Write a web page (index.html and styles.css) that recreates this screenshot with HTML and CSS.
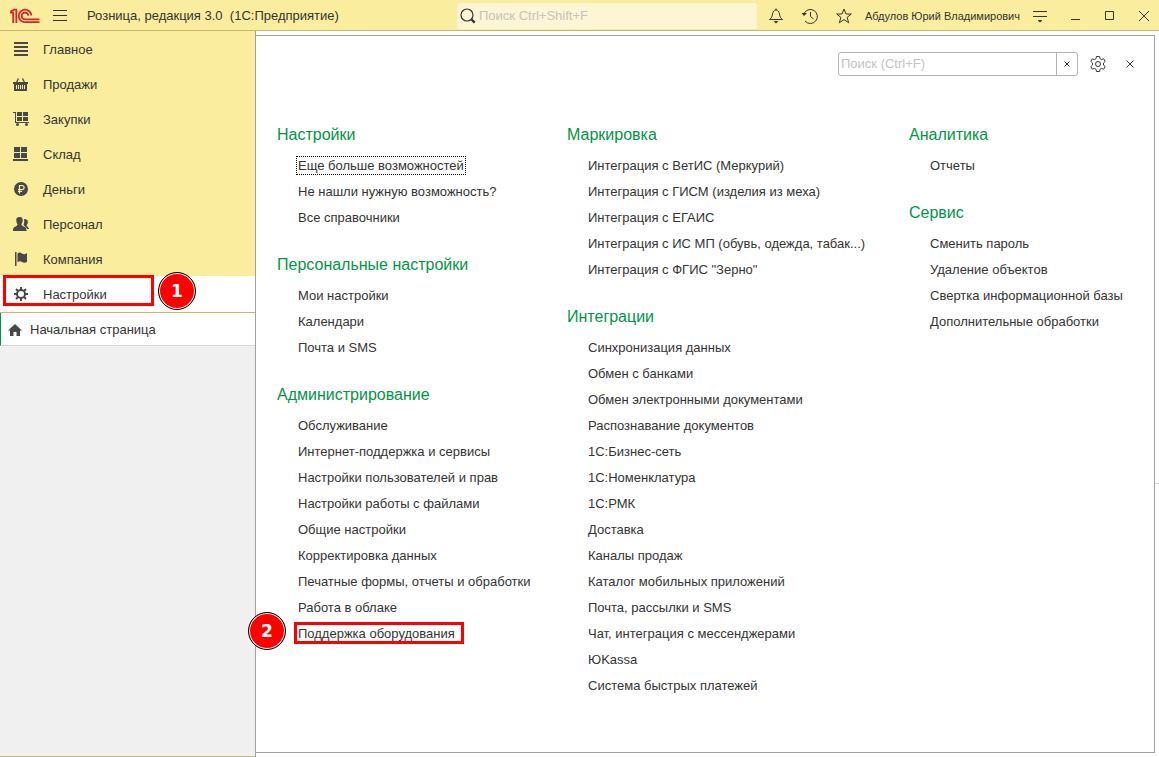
FILE: index.html
```html
<!DOCTYPE html>
<html lang="ru">
<head>
<meta charset="utf-8">
<title>Розница, редакция 3.0</title>
<link rel="stylesheet" href="styles.css">
</head>
<body>
<div class="app">
  <header class="topbar">
    <svg class="logo" viewBox="0 0 30 16" aria-label="1С">
      <path d="M0 4.600h3.200V15M.3 3.800L4 1.700H6.300V15"/>
      <path d="M21.300 7.500A6.300 6.300 0 1 0 15 14.200H29.500M18.300 7.700A3.300 3.300 0 1 0 15 11.300H29.500"/>
    </svg>
    <button class="icon-button menu" aria-label="Меню"><svg viewBox="0 0 14 12"><path d="M0 .5h14M0 5.500h14M0 10.500h14"/></svg></button>
    <h1 class="app-title">Розница, редакция 3.0 &nbsp;(1С:Предприятие)</h1>
    <label class="global-search">
      <svg viewBox="0 0 16 16"><circle cx="7" cy="7" r="6"/><path class="handle" d="M11.500 11.500l3.200 3.200"/></svg>
      <input type="text" placeholder="Поиск Ctrl+Shift+F" aria-label="Глобальный поиск">
    </label>
    <div class="tools">
      <button class="icon-button" aria-label="Уведомления"><svg class="i16" viewBox="0 0 16 16"><path d="M1.500 11.500h13c-2-1.500-2.500-2.500-3-5.500C11 3.500 10 2 8 2S5 3.500 4.500 6c-.5 3-1 4-3 5.500zM8 .5V2"/><path class="solid" d="M5.500 13h5L8 15.500z"/></svg></button>
      <button class="icon-button" aria-label="История"><svg class="i16" viewBox="0 0 16 16"><path d="M1.800 6A7 7 0 1 1 3 13M8.500 4v4.500l3 2.500"/><path class="solid" d="M-.5 5l2.500 3L5 5z"/></svg></button>
      <button class="icon-button" aria-label="Избранное"><svg class="i16" viewBox="0 0 16 16"><path d="M8 1l2 5h5.300l-4.200 3.400 1.600 5.400L8 11.600l-4.700 3.200 1.600-5.400L.7 6H6z"/></svg></button>
    </div>
    <a class="user" href="#">Абдулов Юрий Владимирович</a>
    <div class="window-tools">
      <button class="icon-button" aria-label="Сервис и настройки"><svg class="i14" viewBox="0 0 14 14"><path d="M0 2.500h14M0 7.500h14"/><path class="solid" d="M4.500 11h5L7 13.500z"/></svg></button>
      <button class="icon-button" aria-label="Свернуть"><svg class="i10" viewBox="0 0 10 10"><path d="M0 8.500h9"/></svg></button>
      <button class="icon-button" aria-label="Развернуть"><svg class="i10" viewBox="0 0 10 10"><path d="M.5 .5h8v8h-8z"/></svg></button>
      <button class="icon-button" aria-label="Закрыть"><svg class="i10" viewBox="0 0 10 10"><path d="M0 0l10 10M10 0L0 10"/></svg></button>
    </div>
  </header>

  <aside class="sidebar">
    <nav class="sections">
      <a class="section" href="#"><svg viewBox="0 0 16 16"><path d="M1 0h14v2H1zM1 4h14v2H1zM1 8h14v2H1zM1 12h14v2H1z"/></svg>Главное</a>
      <a class="section" href="#"><svg viewBox="0 0 16 16"><path fill-rule="evenodd" d="M0 5h3l2-4 1 .7L4.500 5h6L9 1.700l1-.7 2 4h3v2h-1v7H1V7H0zM3 8v4h1V8zm2 0v4h1V8zm2 0v4h1V8zm2 0v4h1V8zm2 0v4h1V8z"/></svg>Продажи</a>
      <a class="section" href="#"><svg viewBox="0 0 16 16"><path d="M0 0h3v10h13v1H2V1H0zM4 0h5v4H4zM10 0h5v4h-5zM4 5h5v4H4zM10 5h5v4h-5z"/><circle cx="4.500" cy="12.500" r="1.500"/><circle cx="13.500" cy="12.500" r="1.500"/></svg>Закупки</a>
      <a class="section" href="#"><svg viewBox="0 0 16 16"><path d="M1 0h6v5H1zM8 0h6v5H8zM1 6h6v5H1zM8 6h6v5H8zM0 12h15v2H0z"/></svg>Склад</a>
      <a class="section" href="#"><svg viewBox="0 0 16 16"><circle cx="8" cy="7" r="7"/><path class="cut" d="M6.500 11.500V3.500h2.500a2 2 0 0 1 0 4.200H5M5 9.500h4"/></svg>Деньги</a>
      <a class="section" href="#"><svg viewBox="0 0 16 16"><path d="M6.500 0C9 0 10 1.500 9.700 4c-.2 1.500-.9 2.500-1.200 3.200 0 2 3.500 2.300 4.500 3.800.4.600.5 2 .5 3H0c0-1 0-2.400.5-3 1-1.500 4-1.800 4-3.800C4 6.500 3.500 5.500 3.300 4 3 1.500 4 0 6.500 0z"/><path d="M11 2c3 0 4.300 1.500 3.800 4-.2 1.200-.8 1.500-1.200 2.200 0 1.300 1.800 1.300 2.400 3.800h-1.800c-.8-2-2.700-2.500-3.700-4C11 6.500 11.500 4.500 11 2z"/></svg>Персонал</a>
      <a class="section" href="#"><svg viewBox="0 0 16 16"><path d="M2 0h1.500v14H2zM4.500 1.500c1.500-1.500 3-1 4.500 0s3 1 5-.5v9c-2 1-3.500 1-5 0s-3-1-4.500.5z"/></svg>Компания</a>
      <a class="section current" href="#" aria-current="page"><svg viewBox="0 0 16 16"><path class="gear" d="M8 0v3M8 11v3M1 7h3M12 7h3M3 2l2 2M11 10l2 2M13 2l-2 2M5 10l-2 2"/><circle class="gear" cx="8" cy="7" r="4"/></svg>Настройки<span class="frame frame-section"></span><span class="step step-one">1</span></a>
    </nav>
    <a class="home" href="#"><svg viewBox="0 0 14 12"><path d="M7 0l7 6.500h-2V12H8.500V8h-3v4H2V6.500H0z"/></svg>Начальная страница</a>
  </aside>

  <main class="workspace">
    <section class="panel">
      <div class="panel-bar">
        <div class="panel-search">
          <input type="text" placeholder="Поиск (Ctrl+F)" aria-label="Поиск">
          <button class="clear" aria-label="Очистить"><svg viewBox="0 0 6 6"><path d="M.5.5l5 5M5.500.5l-5 5"/></svg></button>
        </div>
        <button class="icon-button" aria-label="Настройка"><svg class="i16" viewBox="0 0 16 16"><circle cx="8" cy="8" r="2.500"/><path d="M6.500.5h3l.5 2.200 1.500.9 2.100-.8 1.600 2.600L13.500 7v2l1.700 1.600-1.600 2.600-2.100-.8-1.500.9-.5 2.200h-3L6 13.300l-1.500-.9-2.100.8L.8 10.600 2.500 9V7L.8 5.400l1.600-2.600 2.100.8L6 2.700z"/></svg></button>
        <button class="icon-button" aria-label="Закрыть панель"><svg class="i8" viewBox="0 0 8 8"><path d="M.5.5l7 7M7.500.5l-7 7"/></svg></button>
      </div>
      <div class="columns">
        <div class="column">
          <section class="group"><h2>Настройки</h2><ul>
            <li><a class="focused" href="#">Еще больше возможностей</a></li>
            <li><a href="#">Не нашли нужную возможность?</a></li>
            <li><a href="#">Все справочники</a></li></ul></section>
          <section class="group"><h2>Персональные настройки</h2><ul>
            <li><a href="#">Мои настройки</a></li>
            <li><a href="#">Календари</a></li>
            <li><a href="#">Почта и SMS</a></li></ul></section>
          <section class="group"><h2>Администрирование</h2><ul>
            <li><a href="#">Обслуживание</a></li>
            <li><a href="#">Интернет-поддержка и сервисы</a></li>
            <li><a href="#">Настройки пользователей и прав</a></li>
            <li><a href="#">Настройки работы с файлами</a></li>
            <li><a href="#">Общие настройки</a></li>
            <li><a href="#">Корректировка данных</a></li>
            <li><a href="#">Печатные формы, отчеты и обработки</a></li>
            <li><a href="#">Работа в облаке</a></li>
            <li class="marked"><a href="#">Поддержка оборудования</a><span class="frame frame-link"></span><span class="step step-two">2</span></li></ul></section>
        </div>
        <div class="column">
          <section class="group"><h2>Маркировка</h2><ul>
            <li><a href="#">Интеграция с ВетИС (Меркурий)</a></li>
            <li><a href="#">Интеграция с ГИСМ (изделия из меха)</a></li>
            <li><a href="#">Интеграция с ЕГАИС</a></li>
            <li><a href="#">Интеграция с ИС МП (обувь, одежда, табак...)</a></li>
            <li><a href="#">Интеграция с ФГИС "Зерно"</a></li></ul></section>
          <section class="group"><h2>Интеграции</h2><ul>
            <li><a href="#">Синхронизация данных</a></li>
            <li><a href="#">Обмен с банками</a></li>
            <li><a href="#">Обмен электронными документами</a></li>
            <li><a href="#">Распознавание документов</a></li>
            <li><a href="#">1С:Бизнес-сеть</a></li>
            <li><a href="#">1С:Номенклатура</a></li>
            <li><a href="#">1С:РМК</a></li>
            <li><a href="#">Доставка</a></li>
            <li><a href="#">Каналы продаж</a></li>
            <li><a href="#">Каталог мобильных приложений</a></li>
            <li><a href="#">Почта, рассылки и SMS</a></li>
            <li><a href="#">Чат, интеграция с мессенджерами</a></li>
            <li><a href="#">ЮKassa</a></li>
            <li><a href="#">Система быстрых платежей</a></li></ul></section>
        </div>
        <div class="column">
          <section class="group"><h2>Аналитика</h2><ul>
            <li><a href="#">Отчеты</a></li></ul></section>
          <section class="group"><h2>Сервис</h2><ul>
            <li><a href="#">Сменить пароль</a></li>
            <li><a href="#">Удаление объектов</a></li>
            <li><a href="#">Свертка информационной базы</a></li>
            <li><a href="#">Дополнительные обработки</a></li></ul></section>
        </div>
      </div>
    </section>
    <span class="divider"></span>
  </main>
</div>
</body>
</html>
```
FILE: styles.css
```css
* { box-sizing: border-box; }
body {
  margin: 0;
  background: #fff;
  color: #333;
  font: 13px/26px "Liberation Sans", Arial, sans-serif;
}
a { color: inherit; text-decoration: none; }
ul { list-style: none; margin: 0; padding: 0; }
svg { display: block; flex: none; overflow: visible; }
button { border: 0; padding: 0; background: none; cursor: pointer; }
input { font: inherit; color: #333; border: 0; outline: 0; background: none; min-width: 0; padding: 0; }
input::placeholder { color: #c3c3c3; opacity: 1; }

.app {
  display: grid;
  grid-template-columns: 255px 1fr;
  grid-template-rows: auto 1fr;
  min-height: 100vh;
}

/* Top bar */
.topbar {
  grid-column: 1 / -1;
  display: flex;
  align-items: center;
  height: 31px;
  padding: 1px 10px 0;
  background: #fbed9e;
  border-bottom: 1px solid #c5b96c;
}
.logo { width: 30px; height: 16px; fill: none; stroke: #d8232a; stroke-width: 1.8; }
.icon-button { display: grid; place-items: center; }
.icon-button svg { fill: none; stroke: #333; stroke-width: 1; }
.icon-button .solid { fill: #333; stroke: none; }
.menu { margin-left: 13px; }
.menu svg { width: 14px; height: 12px; }
.i16 { width: 16px; height: 16px; }
.i14 { width: 14px; height: 14px; }
.i10 { width: 10px; height: 10px; }
.i8 { width: 8px; height: 8px; }
.app-title { margin: 0 0 0 20px; width: 370px; font-size: 13px; font-weight: normal; white-space: nowrap; }
.global-search {
  flex: 1;
  display: flex;
  align-items: center;
  gap: 3px;
  height: 26px;
  padding: 0 3px;
  border-radius: 3px;
  background: #fdf5d3;
}
.global-search svg { width: 16px; height: 16px; fill: none; stroke: #333; stroke-width: 1.2; }
.global-search .handle { stroke-width: 2.4; }
.global-search input { flex: 1; }
.tools { display: flex; gap: 18px; margin: 0 13px 0 11px; }
.user { font-size: 11px; white-space: nowrap; }
.window-tools { display: flex; gap: 24px; margin-left: 13px; }

/* Sidebar */
.sidebar {
  display: flex;
  flex-direction: column;
  background: #f0f0f0;
  border-bottom: 1px solid #c5b96c;
}
.sections { background: #fbed9e; border-bottom: 1px solid #c5b96c; }
.section {
  position: relative;
  display: flex;
  align-items: center;
  gap: 14px;
  height: 35px;
  padding: 2px 13px 0;
}
.section svg { width: 16px; height: 16px; fill: #484848; }
.section .cut { fill: none; stroke: #fbed9e; stroke-width: 1.2; }
.section .gear { fill: none; stroke: #484848; stroke-width: 2; }
.section.current { height: 36px; background: #fff; }
.home {
  display: flex;
  align-items: center;
  gap: 8px;
  height: 33px;
  padding: 1px 0 0 7px;
  background: #fff;
  border-left: 1px solid #009646;
  border-bottom: 1px solid #d8d8d8;
}
.home svg { width: 14px; height: 12px; fill: #484848; }

/* Workspace */
.workspace { position: relative; display: flex; padding: 4px 4px 4px 0; border-left: 1px solid #a0a0a0; }
.panel { flex: 1; border: 1px solid #a0a0a0; border-left: 0; padding: 16px 20px 20px 21px; }
.panel-bar { display: flex; justify-content: flex-end; align-items: center; gap: 12px; }
.panel-search { display: flex; width: 240px; height: 24px; border: 1px solid #b3b3b3; border-radius: 3px; }
.panel-search input { flex: 1; padding-left: 2px; }
.clear { display: grid; place-items: center; width: 21px; border-left: 1px solid #b3b3b3; }
.clear svg { width: 6px; height: 6px; stroke: #333; }
.panel-bar .i8 { margin-left: 8px; }
.columns { display: grid; grid-template-columns: 290px 342px 1fr; margin-top: 46px; }
.group + .group { margin-top: 21px; }
.group h2 { margin: 0 0 5px; color: #009646; font-size: 16px; font-weight: normal; line-height: 26px; }
.group ul { padding-left: 21px; }
.group li { white-space: nowrap; }
.focused { outline: 1px dotted #000; outline-offset: 1px; }
.marked { position: relative; }
.divider { position: absolute; right: 0; top: 452px; width: 4px; height: 1px; background: #d0d0d0; }

/* Step markers */
.frame { position: absolute; border: 3px solid #fe0000; }
.frame-section { left: 3px; top: -1px; width: 151px; height: 31px; }
.frame-link { left: -4px; top: 1px; width: 170px; height: 22px; }
.step {
  position: absolute;
  width: 38px;
  height: 38px;
  border: 1px solid #000;
  border-radius: 50%;
  background: #fe0000;
  box-shadow: inset 0 0 0 1px #fff;
  color: #fff;
  font: bold 17px/36px "DejaVu Sans", sans-serif;
  text-align: center;
}
.step-one { left: 158px; top: -4px; }
.step-two { left: -50px; top: -9px; }
```
